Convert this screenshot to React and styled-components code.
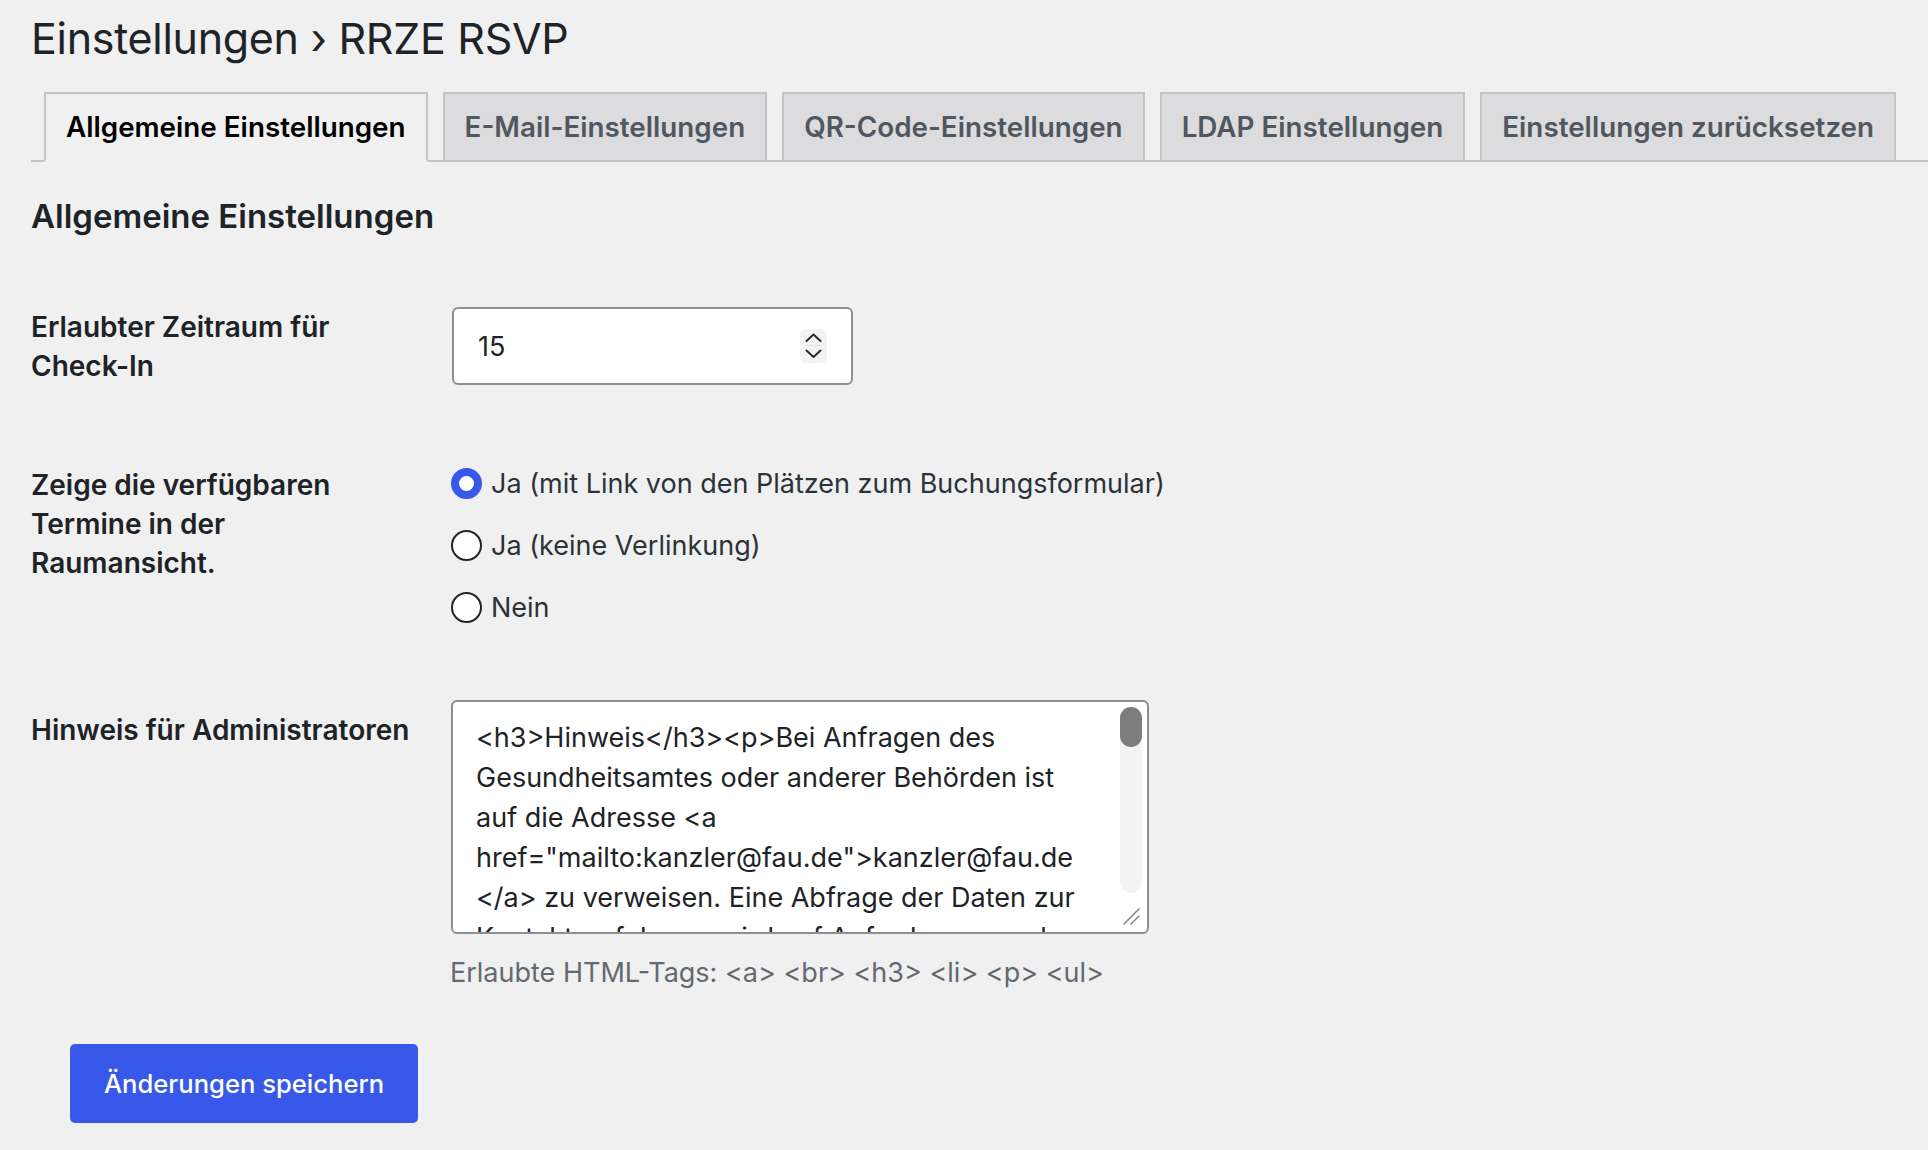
import React, { useState } from "react";
import styled, { createGlobalStyle } from "styled-components";

const GlobalStyle = createGlobalStyle`
  html, body {
    margin: 0;
    padding: 0;
    background: #f0f0f1;
  }
  body {
    font-family: Inter, "Noto Sans", "Liberation Sans", sans-serif;
    color: #1d2327;
    -webkit-font-smoothing: antialiased;
  }
  * { box-sizing: border-box; }
`;

const Wrap = styled.div`
  padding: 14px 0 40px 31px;
`;

const Title = styled.h1`
  margin: 0;
  font-size: 43px;
  line-height: 48px;
  font-weight: 400;
  color: #1d2327;
  letter-spacing: -0.3px;
`;

const TabBar = styled.nav`
  margin-top: 30px;
  display: flex;
  gap: 15px;
  padding-left: 13px;
  border-bottom: 2px solid #c3c4c7;
`;

const Tab = styled.a`
  height: 70px;
  margin-bottom: -2px;
  display: flex;
  align-items: center;
  padding: 0 20px;
  border: 2px solid #c3c4c7;
  border-bottom-color: ${(p) => (p.$active ? "#f0f0f1" : "#c3c4c7")};
  background: ${(p) => (p.$active ? "#f0f0f1" : "#dcdcde")};
  color: ${(p) => (p.$active ? "#000" : "#50575e")};
  font-size: 27.8px;
  font-weight: 600;
  text-decoration: none;
  white-space: nowrap;
  cursor: pointer;
`;

const SectionTitle = styled.h2`
  margin: 34px 0 0;
  font-size: 33px;
  line-height: 40px;
  font-weight: 600;
  color: #1d2327;
`;

const Form = styled.form`
  margin-top: 71px;
`;

const Row = styled.div`
  display: grid;
  grid-template-columns: 421px 1fr;
  align-items: start;
  margin-top: ${(p) => p.$gap || 0}px;
`;

const Label = styled.label`
  display: block;
  padding-top: ${(p) => p.$offset || 0}px;
  padding-right: 40px;
  font-size: 28px;
  line-height: 39px;
  font-weight: 600;
  color: #1d2327;
`;

const NumberBox = styled.div`
  width: 401px;
  height: 78px;
  display: flex;
  align-items: center;
  padding: 0 24px 0 24px;
  background: #fff;
  border: 2px solid #8c8f94;
  border-radius: 6px;
`;

const NumberInput = styled.input`
  flex: 1;
  min-width: 0;
  border: 0;
  outline: none;
  background: transparent;
  padding: 0;
  font-family: inherit;
  font-size: 27px;
  color: #1d2327;
  -moz-appearance: textfield;
  &::-webkit-inner-spin-button,
  &::-webkit-outer-spin-button {
    -webkit-appearance: none;
    margin: 0;
  }
`;

const Stepper = styled.svg`
  flex: none;
  display: block;
`;

const RadioGroup = styled.fieldset`
  margin: 0;
  padding: 0;
  border: 0;
  display: flex;
  flex-direction: column;
  gap: 28px;
`;

const Option = styled.label`
  height: 34px;
  display: flex;
  align-items: center;
  gap: 9px;
  font-size: 27px;
  color: #2c3338;
  cursor: pointer;
`;

const Radio = styled.input.attrs({ type: "radio" })`
  -webkit-appearance: none;
  appearance: none;
  margin: 0 0 0 -1px;
  width: 31px;
  height: 31px;
  flex: none;
  border-radius: 50%;
  border: 2px solid #1d2327;
  background: #fff;
  &:checked {
    border: 8px solid #3858e9;
  }
`;

const Field = styled.div`
  display: flex;
  flex-direction: column;
`;

const AreaFrame = styled.div`
  position: relative;
  width: 698px;
  height: 234px;
  margin-left: -1px;
`;

const NoticeArea = styled.textarea`
  display: block;
  width: 100%;
  height: 100%;
  margin: 0;
  padding: 16px 40px 0 23px;
  border: 2px solid #8c8f94;
  border-radius: 6px;
  background: #fff;
  font-family: inherit;
  font-size: 27px;
  line-height: 40px;
  color: #1d2327;
  white-space: pre;
  overflow: hidden;
  resize: none;
  outline: none;
  scrollbar-width: none;
`;

/* overlay scrollbar and resize grip drawn on top of the text area */
const ScrollTrack = styled.div`
  position: absolute;
  top: 7px;
  right: 7px;
  width: 22px;
  height: 186px;
  border-radius: 11px;
  background: #f4f4f4;
  pointer-events: none;
`;

const ScrollThumb = styled.div`
  width: 22px;
  height: 40px;
  border-radius: 11px;
  background: #7d7d7d;
`;

const Grip = styled.svg`
  position: absolute;
  right: 8px;
  bottom: 8px;
  pointer-events: none;
`;

const Hint = styled.p`
  margin: 19px 0 0 -2px;
  font-size: 27px;
  line-height: 40px;
  color: #646970;
`;

const SaveButton = styled.button`
  display: block;
  margin: 51px 0 0 39px;
  width: 348px;
  height: 79px;
  border: 0;
  border-radius: 5px;
  background: #3858e9;
  color: #fff;
  font-family: inherit;
  font-size: 25.6px;
  font-weight: 500;
  cursor: pointer;
`;

const tabs = [
  "Allgemeine Einstellungen",
  "E-Mail-Einstellungen",
  "QR-Code-Einstellungen",
  "LDAP Einstellungen",
  "Einstellungen zurücksetzen",
];

const options = [
  "Ja (mit Link von den Plätzen zum Buchungsformular)",
  "Ja (keine Verlinkung)",
  "Nein",
];

const notice = [
  "<h3>Hinweis</h3><p>Bei Anfragen des",
  "Gesundheitsamtes oder anderer Behörden ist",
  "auf die Adresse <a",
  'href="mailto:kanzler@fau.de">kanzler@fau.de',
  "</a> zu verweisen. Eine Abfrage der Daten zur",
  "Kontaktverfolgung wird auf Anforderung und",
  "nach Prüfung durch die Kanzlerin veranlasst.</p>",
  "<p>Die erhobenen Kontaktdaten werden",
  "ausschließlich zum Zweck der",
  "Nachverfolgung von Infektionsketten",
  "gespeichert und nach Ablauf der gesetzlichen",
  "Aufbewahrungsfrist automatisch gelöscht.</p>",
].join("\n");

function StepperIcon() {
  return (
    <Stepper width="27" height="34" viewBox="0 0 27 34">
      <rect x="0" y="0" width="27" height="34" rx="6" fill="#f3f3f3" />
      <line x1="5" y1="16.5" x2="22" y2="16.5" stroke="#e0e0e0" strokeWidth="1" />
      <path d="M6.5 12 L13.5 5.5 L20.5 12" fill="none" stroke="#2a2a2a" strokeWidth="2" strokeLinecap="round" strokeLinejoin="round" />
      <path d="M6.5 21.5 L13.5 28 L20.5 21.5" fill="none" stroke="#2a2a2a" strokeWidth="2" strokeLinecap="round" strokeLinejoin="round" />
    </Stepper>
  );
}

export default function App() {
  const [minutes, setMinutes] = useState("15");
  const [display, setDisplay] = useState(0);
  const [text, setText] = useState(notice);

  return (
    <>
      <GlobalStyle />
      <Wrap>
        <Title>Einstellungen › RRZE RSVP</Title>
        <TabBar>
          {tabs.map((t, i) => (
            <Tab key={t} $active={i === 0}>
              {t}
            </Tab>
          ))}
        </TabBar>

        <SectionTitle>Allgemeine Einstellungen</SectionTitle>

        <Form onSubmit={(e) => e.preventDefault()}>
          <Row>
            <Label $offset={1} htmlFor="checkin">
              Erlaubter Zeitraum für Check-In
            </Label>
            <NumberBox>
              <NumberInput
                id="checkin"
                type="number"
                value={minutes}
                onChange={(e) => setMinutes(e.target.value)}
              />
              <StepperIcon />
            </NumberBox>
          </Row>

          <Row $gap={80}>
            <Label>Zeige die verfügbaren Termine in der Raumansicht.</Label>
            <RadioGroup>
              {options.map((o, i) => (
                <Option key={o}>
                  <Radio
                    name="display"
                    checked={display === i}
                    onChange={() => setDisplay(i)}
                  />
                  {o}
                </Option>
              ))}
            </RadioGroup>
          </Row>

          <Row $gap={76}>
            <Label $offset={11} htmlFor="notice">
              Hinweis für Administratoren
            </Label>
            <Field>
              <AreaFrame>
                <NoticeArea
                  id="notice"
                  wrap="off"
                  value={text}
                  onChange={(e) => setText(e.target.value)}
                />
                <ScrollTrack>
                  <ScrollThumb />
                </ScrollTrack>
                <Grip width="20" height="20" viewBox="0 0 20 20">
                  <path d="M3 18 L18 3 M10 18 L18 10" stroke="#8a8a8a" strokeWidth="1.6" strokeLinecap="round" />
                </Grip>
              </AreaFrame>
              <Hint>Erlaubte HTML-Tags: &lt;a&gt; &lt;br&gt; &lt;h3&gt; &lt;li&gt; &lt;p&gt; &lt;ul&gt;</Hint>
            </Field>
          </Row>

          <SaveButton type="submit">Änderungen speichern</SaveButton>
        </Form>
      </Wrap>
    </>
  );
}
